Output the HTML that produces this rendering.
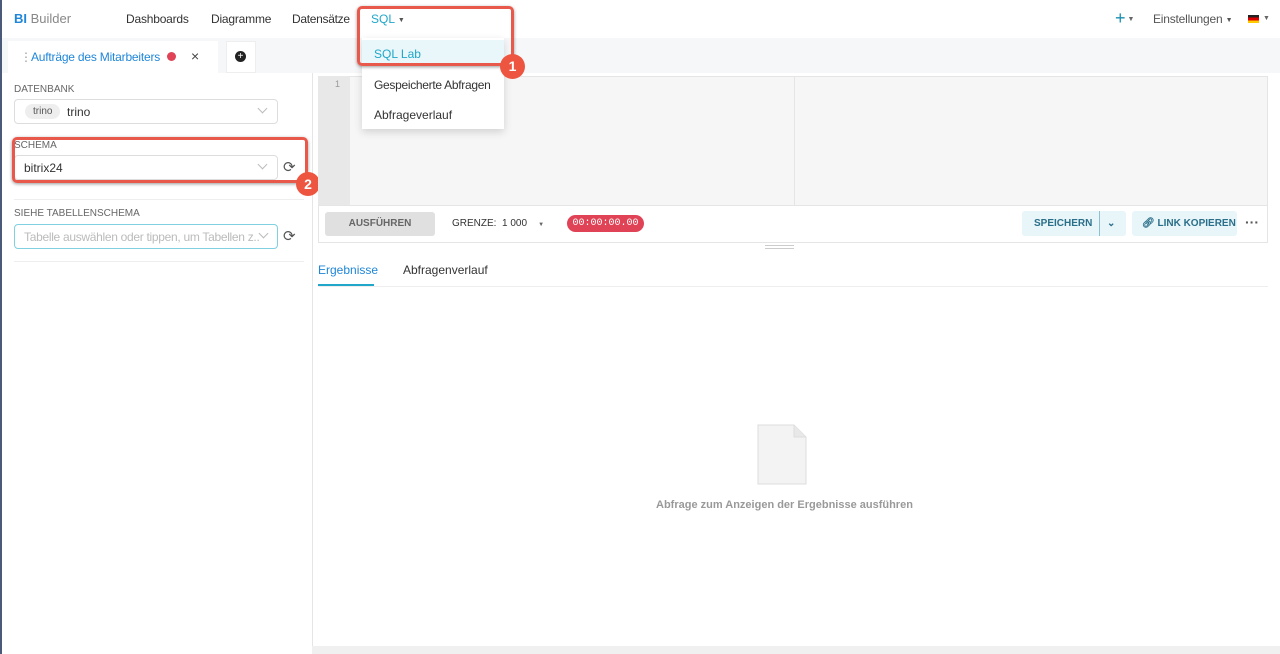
<!DOCTYPE html>
<html><head><meta charset="utf-8"><style>
*{box-sizing:border-box;margin:0;padding:0}
body{width:1280px;height:654px;overflow:hidden;font-family:"Liberation Sans",sans-serif;background:#fff;position:relative;color:#333}
.a{position:absolute}
.t{font-size:12px;white-space:nowrap}
.chev{position:absolute;width:7px;height:7px;border-right:1px solid #bbb;border-bottom:1px solid #bbb;transform:rotate(45deg)}
</style></head><body>
<div class="a" style="left:0;top:0;width:2px;height:654px;background:#4a5a78"></div>
<!-- header -->
<div class="a t" style="left:14px;top:11px;font-size:13px"><b style="color:#1f86d8">BI</b> <span style="color:#888">Builder</span></div>
<div class="a t" style="left:126px;top:12px;font-size:12px;letter-spacing:-0.2px">Dashboards</div>
<div class="a t" style="left:211px;top:12px;letter-spacing:-0.2px">Diagramme</div>
<div class="a t" style="left:292px;top:12px;letter-spacing:-0.3px">Datensätze</div>
<div class="a t" style="left:371px;top:12px;color:#20a7c9">SQL <span style="font-size:7px;color:#555;vertical-align:1px">▼</span></div>
<div class="a t" style="left:1115px;top:8px;color:#1a8fb0;font-size:18px">+<span style="font-size:7px;color:#666;vertical-align:3px"> ▼</span></div>
<div class="a t" style="left:1153px;top:12px;color:#555;letter-spacing:-0.2px">Einstellungen <span style="font-size:7px;vertical-align:1px">▼</span></div>
<div class="a" style="left:1248px;top:15px;width:11px;height:8px;background:linear-gradient(#222 33%,#d00 33% 66%,#fc0 66%)"></div>
<div class="a t" style="left:1263px;top:15px;font-size:7px;color:#666">▼</div>
<!-- tab bar -->
<div class="a" style="left:2px;top:38px;width:1278px;height:35px;background:#f5f7f9"></div>
<div class="a" style="left:8px;top:41px;width:210px;height:32px;background:#fff"></div>
<div class="a t" style="left:20px;top:50px;color:#999">⋮</div>
<div class="a t" style="left:31px;top:50px;color:#1f86d8;letter-spacing:-0.2px">Aufträge des Mitarbeiters</div>
<div class="a" style="left:167px;top:52px;width:9px;height:9px;border-radius:50%;background:#e04355"></div>
<div class="a t" style="left:191px;top:48px;font-size:14px;color:#444">×</div>
<div class="a" style="left:226px;top:41px;width:30px;height:32px;background:#fff;border:1px solid #eee"></div>
<div class="a" style="left:235px;top:51px;width:11px;height:11px;border-radius:50%;background:#222;color:#fff;font-size:10px;line-height:11px;text-align:center">+</div>
<!-- left panel -->
<div class="a" style="left:312px;top:73px;width:1px;height:581px;background:#e5e5e5"></div>
<div class="a t" style="left:14px;top:84px;font-size:10px;color:#666">DATENBANK</div>
<div class="a" style="left:14px;top:99px;width:264px;height:25px;border:1px solid #ddd;border-radius:4px"></div>
<div class="a t" style="left:25px;top:104px;background:#eee;border-radius:8px;padding:2px 8px;font-size:10px;color:#555">trino</div>
<div class="a t" style="left:67px;top:105px">trino</div>
<div class="chev" style="left:259px;top:105px"></div>
<div class="a t" style="left:14px;top:140px;font-size:10px;color:#666">SCHEMA</div>
<div class="a" style="left:14px;top:155px;width:264px;height:25px;border:1px solid #ddd;border-radius:4px"></div>
<div class="a t" style="left:24px;top:161px">bitrix24</div>
<div class="chev" style="left:259px;top:161px"></div>
<div class="a t" style="left:283px;top:158px;font-size:15px;color:#555">⟳</div>
<div class="a" style="left:12px;top:137px;width:296px;height:46px;border:3px solid #e8594b;border-radius:5px;box-shadow:0 1px 3px rgba(0,0,0,.4)"></div>
<div class="a" style="left:296px;top:172px;width:24px;height:24px;border-radius:50%;background:#ee5540;color:#fff;font-size:14px;font-weight:bold;text-align:center;line-height:24px">2</div>
<div class="a" style="left:14px;top:199px;width:290px;height:1px;background:#eee"></div>
<div class="a t" style="left:14px;top:208px;font-size:10px;color:#666">SIEHE TABELLENSCHEMA</div>
<div class="a" style="left:14px;top:224px;width:264px;height:25px;border:1px solid #7fd0e0;border-radius:4px;background:#fff"></div>
<div class="a t" style="left:24px;top:230px;color:#bbb;width:236px;overflow:hidden;letter-spacing:-0.3px">Tabelle auswählen oder tippen, um Tabellen z...</div>
<div class="chev" style="left:260px;top:230px"></div>
<div class="a t" style="left:283px;top:227px;font-size:15px;color:#555">⟳</div>
<div class="a" style="left:14px;top:261px;width:290px;height:1px;background:#eee"></div>
<!-- editor -->
<div class="a" style="left:318px;top:76px;width:950px;height:130px;background:#f6f6f6;border:1px solid #e5e5e5"></div>
<div class="a" style="left:318px;top:76px;width:32px;height:130px;background:#e8e8e8"></div>
<div class="a t" style="left:335px;top:79px;font-size:9px;color:#999">1</div>
<div class="a" style="left:794px;top:76px;width:1px;height:130px;background:#e5e5e5"></div>
<div class="a" style="left:318px;top:205px;width:950px;height:38px;background:#fff;border:1px solid #e5e5e5"></div>
<div class="a t" style="left:325px;top:212px;width:110px;height:24px;background:#e0e0e0;border-radius:3px;text-align:center;line-height:24px;font-size:10px;font-weight:bold;color:#666">AUSFÜHREN</div>
<div class="a t" style="left:452px;top:218px;font-size:10px">GRENZE:&nbsp; 1 000 &nbsp;&nbsp;&nbsp;<span style="font-size:6px;color:#666">▼</span></div>
<div class="a t" style="left:567px;top:215px;width:77px;height:17px;border-radius:9px;background:#e04355;color:#fff;font-family:'Liberation Mono',monospace;font-size:10px;text-align:center;line-height:17px">00:00:00.00</div>
<div class="a t" style="left:1022px;top:211px;width:104px;height:25px;background:#e8f5f9;border-radius:3px;font-size:10px;font-weight:bold;color:#2a6f8a;line-height:25px;padding-left:12px">SPEICHERN<span style="position:absolute;left:77px;top:0;width:1px;height:25px;background:#8fc0d0"></span><span style="position:absolute;left:85px;top:0">⌄</span></div>
<div class="a t" style="left:1132px;top:211px;width:105px;height:25px;background:#e8f5f9;border-radius:3px;font-size:10px;font-weight:bold;color:#2a6f8a;line-height:25px;padding-left:10px">🔗︎ LINK KOPIEREN</div>
<div class="a t" style="left:1245px;top:214px;font-size:14px;color:#555;font-weight:bold">···</div>
<div class="a" style="left:765px;top:245px;width:29px;height:1px;background:#ccc"></div>
<div class="a" style="left:765px;top:248px;width:29px;height:1px;background:#ccc"></div>
<div class="a t" style="left:318px;top:263px;color:#1f86d8">Ergebnisse</div>
<div class="a t" style="left:403px;top:263px">Abfragenverlauf</div>
<div class="a" style="left:318px;top:284px;width:56px;height:2px;background:#20a7c9"></div>
<div class="a" style="left:318px;top:286px;width:950px;height:1px;background:#eee"></div>
<svg class="a" style="left:757px;top:424px" width="50" height="61"><path d="M1 1H37L49 13V60H1Z" fill="#f3f3f3" stroke="#ddd"/><path d="M37 1V13H49" fill="#e8e8e8" stroke="#ddd"/></svg>
<div class="a t" style="left:656px;top:499px;color:#999;font-size:11px;font-weight:bold">Abfrage zum Anzeigen der Ergebnisse ausführen</div>
<div class="a" style="left:312px;top:646px;width:968px;height:8px;background:#f0f0f0"></div>
<!-- dropdown -->
<div class="a" style="left:362px;top:38px;width:142px;height:91px;background:#fff;box-shadow:0 3px 8px rgba(0,0,0,.15)"></div>
<div class="a" style="left:362px;top:40px;width:142px;height:24px;background:#e9f6fa"></div>
<div class="a t" style="left:374px;top:47px;color:#20a7c9">SQL Lab</div>
<div class="a t" style="left:374px;top:78px;letter-spacing:-0.3px">Gespeicherte Abfragen</div>
<div class="a t" style="left:374px;top:108px">Abfrageverlauf</div>
<div class="a" style="left:357px;top:6px;width:157px;height:60px;border:3px solid #e8594b;border-radius:5px;box-shadow:0 1px 3px rgba(0,0,0,.4)"></div>
<div class="a" style="left:500px;top:54px;width:25px;height:25px;border-radius:50%;background:#ee5540;color:#fff;font-size:14px;font-weight:bold;text-align:center;line-height:25px">1</div>
</body></html>
